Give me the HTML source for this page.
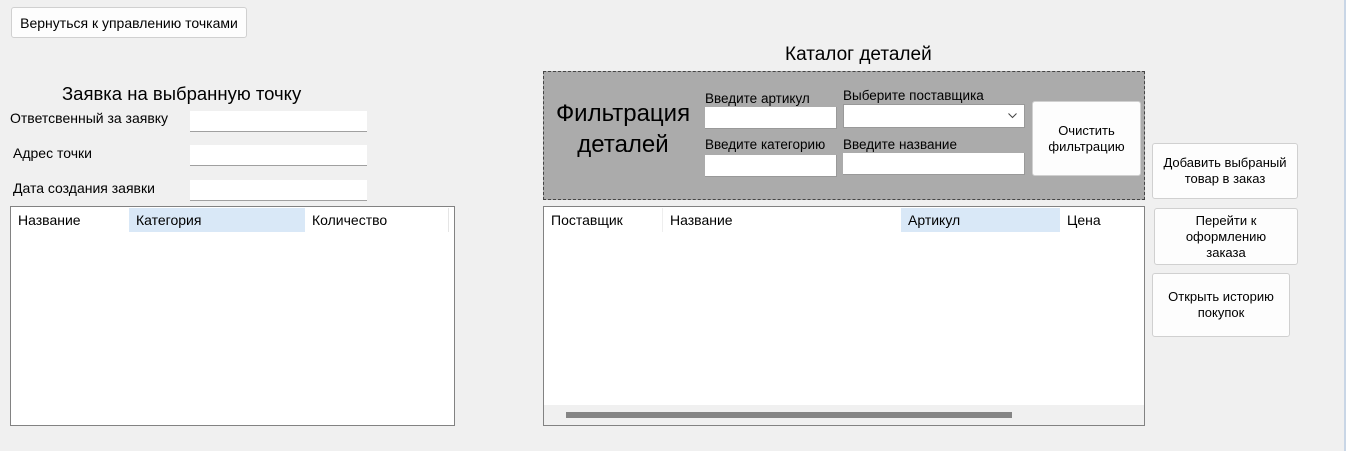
<!DOCTYPE html>
<html><head><meta charset="utf-8"><style>
*{box-sizing:border-box;margin:0;padding:0}
body{width:1346px;height:451px;background:#f0f0f0;position:relative;overflow:hidden;font-family:"Liberation Sans","DejaVu Sans",sans-serif;font-size:14px;color:#000}
.a{position:absolute;white-space:nowrap}
.btn{position:absolute;background:#fdfdfd;border:1px solid #d0d0d0;border-radius:3px;text-align:center;display:flex;align-items:center;justify-content:center;line-height:16px;font-size:13px}
.in{position:absolute;background:#fff;border-bottom:1px solid #a0a0a0}
.grid{position:absolute;background:#fff;border:1px solid #828282}
.hd{position:absolute;top:1px;height:24px;line-height:24px;padding-left:7px;font-size:14px}
</style></head><body>
<div class="btn" style="left:11px;top:7px;width:236px;height:31px;font-size:14px">Вернуться к управлению точками</div>
<div class="a" style="left:62px;top:83px;font-size:18.5px">Заявка на выбранную точку</div>
<div class="a" style="left:10px;top:110px">Ответсвенный за заявку</div>
<div class="a" style="left:13px;top:145px">Адрес точки</div>
<div class="a" style="left:13px;top:180px">Дата создания заявки</div>
<div class="in" style="left:190px;top:111px;width:177px;height:21px"></div>
<div class="in" style="left:190px;top:145px;width:177px;height:21px"></div>
<div class="in" style="left:190px;top:180px;width:177px;height:21px"></div>
<div class="grid" style="left:10px;top:206px;width:445px;height:220px">
<div class="hd" style="left:0;width:118px">Название</div>
<div class="hd" style="left:118px;width:176px;background:#d9e8f7">Категория</div>
<div class="hd" style="left:294px;width:144px;border-right:1px solid #e5e5e5">Количество</div>
</div>
<div class="a" style="left:785px;top:44px;font-size:19px">Каталог деталей</div>
<div class="a" style="left:543px;top:71px;width:602px;height:129px;background:#ababab;border:1px dashed #444"></div>
<div class="a" style="left:551px;top:98px;font-size:24px;line-height:31px;text-align:center;width:144px">Фильтрация<br>деталей</div>
<div class="a" style="left:705px;top:91px;font-size:13.5px">Введите артикул</div>
<div class="a" style="left:843px;top:88px;font-size:13.5px">Выберите поставщика</div>
<div class="a" style="left:705px;top:137px;font-size:13.5px">Введите категорию</div>
<div class="a" style="left:843px;top:137px;font-size:13.5px">Введите название</div>
<div class="in" style="left:705px;top:107px;width:132px;height:22px;border:1px solid #999;border-top:none;border-left:none"></div>
<div class="in" style="left:843px;top:104px;width:182px;height:24px;border:1px solid #999">
<svg style="position:absolute;right:7px;top:8px" width="9" height="6"><path d="M0.5 0.5L4.5 4.5L8.5 0.5" fill="none" stroke="#444"/></svg></div>
<div class="in" style="left:705px;top:155px;width:132px;height:22px;border:1px solid #999;border-top:none;border-left:none"></div>
<div class="in" style="left:843px;top:153px;width:182px;height:22px;border:1px solid #999;border-top:none;border-left:none"></div>
<div class="btn" style="left:1032px;top:101px;width:109px;height:75px">Очистить<br>фильтрацию</div>
<div class="grid" style="left:543px;top:206px;width:602px;height:220px">
<div class="hd" style="left:0;width:118px">Поставщик</div>
<div class="hd" style="left:118px;width:239px;border-left:1px solid #eee">Название</div>
<div class="hd" style="left:357px;width:159px;background:#d9e8f7">Артикул</div>
<div class="hd" style="left:516px;width:84px">Цена</div>
<div style="position:absolute;left:0;right:0;bottom:0;height:20px;background:#f0f0f0"><div style="position:absolute;left:22px;top:7px;width:446px;height:6px;background:#858585"></div></div>
</div>
<div class="btn" style="left:1152px;top:143px;width:146px;height:56px">Добавить выбраный<br>товар в заказ</div>
<div class="btn" style="left:1154px;top:208px;width:144px;height:57px">Перейти к<br>оформлению<br>заказа</div>
<div class="btn" style="left:1152px;top:273px;width:138px;height:64px">Открыть историю<br>покупок</div>
<div class="a" style="left:1344px;top:0;width:2px;height:451px;background:#c9d6e6"></div>
</body></html>
